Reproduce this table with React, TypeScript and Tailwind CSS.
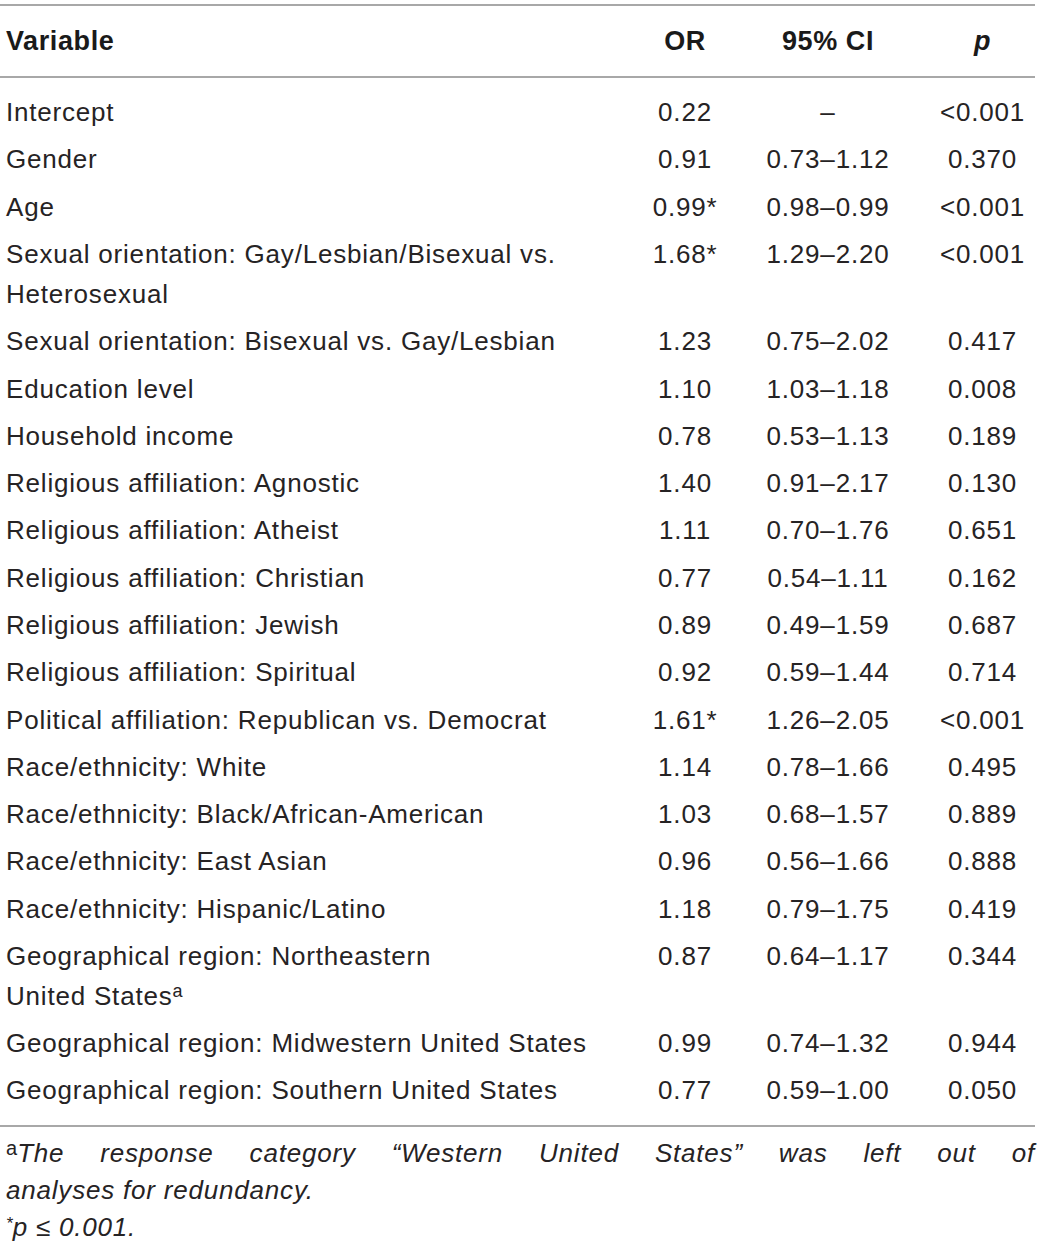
const rows: { label: React.ReactNode; or: string; ci: string; p: string }[] = [
  { label: "Intercept", or: "0.22", ci: "–", p: "<0.001" },
  { label: "Gender", or: "0.91", ci: "0.73–1.12", p: "0.370" },
  { label: "Age", or: "0.99*", ci: "0.98–0.99", p: "<0.001" },
  {
    label: (
      <>
        Sexual orientation: Gay/Lesbian/Bisexual vs.
        <br />
        Heterosexual
      </>
    ),
    or: "1.68*",
    ci: "1.29–2.20",
    p: "<0.001",
  },
  { label: "Sexual orientation: Bisexual vs. Gay/Lesbian", or: "1.23", ci: "0.75–2.02", p: "0.417" },
  { label: "Education level", or: "1.10", ci: "1.03–1.18", p: "0.008" },
  { label: "Household income", or: "0.78", ci: "0.53–1.13", p: "0.189" },
  { label: "Religious affiliation: Agnostic", or: "1.40", ci: "0.91–2.17", p: "0.130" },
  { label: "Religious affiliation: Atheist", or: "1.11", ci: "0.70–1.76", p: "0.651" },
  { label: "Religious affiliation: Christian", or: "0.77", ci: "0.54–1.11", p: "0.162" },
  { label: "Religious affiliation: Jewish", or: "0.89", ci: "0.49–1.59", p: "0.687" },
  { label: "Religious affiliation: Spiritual", or: "0.92", ci: "0.59–1.44", p: "0.714" },
  { label: "Political affiliation: Republican vs. Democrat", or: "1.61*", ci: "1.26–2.05", p: "<0.001" },
  { label: "Race/ethnicity: White", or: "1.14", ci: "0.78–1.66", p: "0.495" },
  { label: "Race/ethnicity: Black/African-American", or: "1.03", ci: "0.68–1.57", p: "0.889" },
  { label: "Race/ethnicity: East Asian", or: "0.96", ci: "0.56–1.66", p: "0.888" },
  { label: "Race/ethnicity: Hispanic/Latino", or: "1.18", ci: "0.79–1.75", p: "0.419" },
  {
    label: (
      <>
        Geographical region: Northeastern
        <br />
        United States<span className="text-[18px] align-[8px] leading-none tracking-normal">a</span>
      </>
    ),
    or: "0.87",
    ci: "0.64–1.17",
    p: "0.344",
  },
  { label: "Geographical region: Midwestern United States", or: "0.99", ci: "0.74–1.32", p: "0.944" },
  { label: "Geographical region: Southern United States", or: "0.77", ci: "0.59–1.00", p: "0.050" },
];

const cols = "grid grid-cols-[628px_114px_172px_1fr]";

export default function App() {
  return (
    <main className="bg-white w-[1043px] min-h-[1250px] text-[#262324] font-['Liberation_Sans',Arial,sans-serif] text-[26px] tracking-[0.8px]">
      <div className="w-[1035px] pt-[4px]">
        {/* Header */}
        <div className="h-[2px] bg-[#a8a8a8]" />
        <div className={`${cols} h-[70px] items-center font-bold text-[27px] tracking-[0.6px] text-[#1a1a1a]`}>
          <div className="pl-[6px]">Variable</div>
          <div className="text-center">OR</div>
          <div className="text-center">95% CI</div>
          <div className="text-center pl-[16px] italic">p</div>
        </div>
        <div className="h-[2px] bg-[#a8a8a8]" />

        {/* Body rows */}
        <div className="py-[10.5px]">
          {rows.map((r, i) => (
            <div key={i} className={`${cols} items-start leading-[40px] py-[3.65px]`}>
              <div className="pl-[6px]">{r.label}</div>
              <div className="text-center">{r.or}</div>
              <div className="text-center">{r.ci}</div>
              <div className="text-center pl-[16px]">{r.p}</div>
            </div>
          ))}
        </div>
        <div className="h-[2px] bg-[#a8a8a8]" />

        {/* Footnotes */}
        <div className="pt-[8px] pl-[6px] leading-[37px] italic">
          <div className="text-justify [text-align-last:justify]">
            <span className="not-italic text-[20px] align-[7px] leading-none tracking-normal">a</span>
            The response category “Western United States” was left out of
          </div>
          <div>analyses for redundancy.</div>
          <div>
            <span className="text-[17px] align-[7px] leading-none tracking-normal">*</span>p ≤ 0.001.
          </div>
        </div>
      </div>
    </main>
  );
}
